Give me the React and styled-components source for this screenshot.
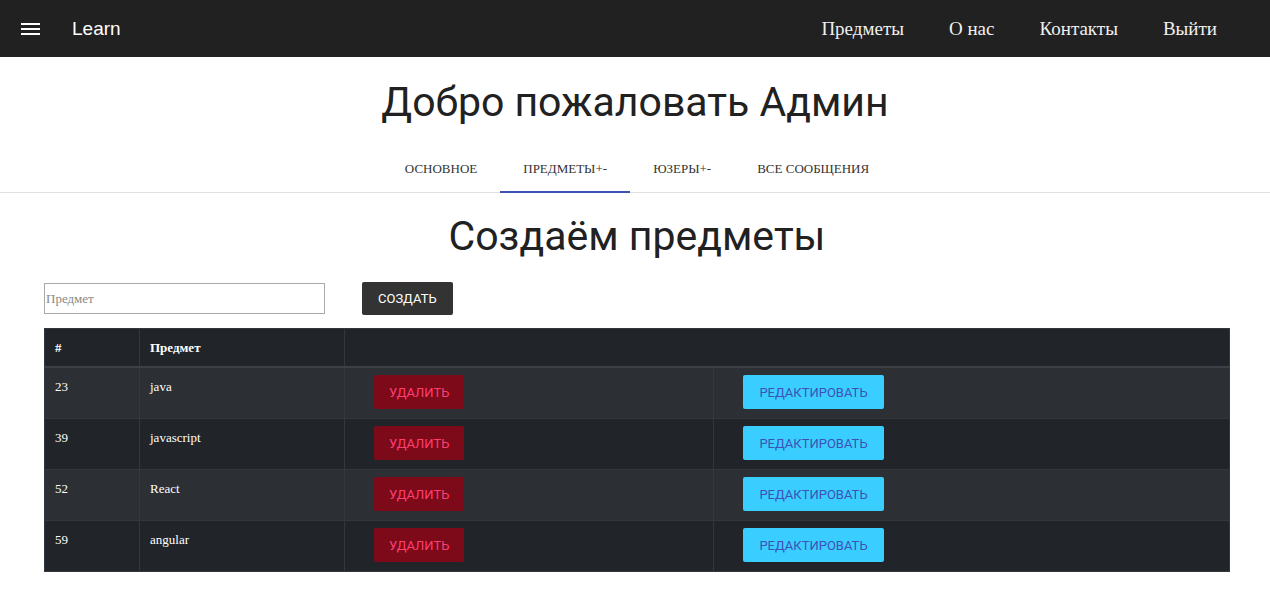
import React from 'react';
import styled, { createGlobalStyle } from 'styled-components';

const GlobalStyle = createGlobalStyle`
	body {
		margin: 0;
		background: #fff;
		font-family: 'Liberation Serif', serif;
	}
`;

const NavBar = styled.nav`
	display: flex;
	align-items: center;
	height: 57px;
	padding: 0 53px 0 21px;
	background: #212121;
	color: #fff;
`;

const Burger = styled.button`
	display: flex;
	flex-direction: column;
	justify-content: space-between;
	width: 19px;
	height: 12px;
	padding: 0;
	border: 0;
	background: none;
	margin-right: 32px;

	span {
		display: block;
		height: 2px;
		background: #fff;
	}
`;

const Brand = styled.a`
	font-family: 'Liberation Sans', Arial, sans-serif;
	font-size: 19px;
	font-weight: 400;
	color: #fff;
	margin-right: auto;
`;

const NavLinks = styled.div`
	display: flex;
	gap: 45px;
`;

const NavLink = styled.a`
	font-family: 'Liberation Serif', serif;
	font-size: 19px;
	color: #f0f0f0;
`;

const Title = styled.h1`
	margin: 0;
	padding-top: 21px;
	text-align: center;
	font-family: Roboto, 'Liberation Sans', sans-serif;
	font-size: 41px;
	font-weight: 400;
	line-height: 48px;
	color: #212121;
`;

const TabBar = styled.div`
	display: flex;
	justify-content: center;
	margin-top: 18px;
	padding-left: 4px;
	border-bottom: 1px solid #e0e0e0;
`;

const Tab = styled.div`
	height: 49px;
	padding: 3px 23px 0;
	display: flex;
	align-items: center;
	font-family: 'Liberation Serif', serif;
	font-size: 13px;
	text-transform: uppercase;
	color: #333;
	box-sizing: border-box;
	border-bottom: 2px solid ${(p) => (p.$active ? '#3f51b5' : 'transparent')};
	margin-bottom: -1px;
`;

const Section = styled.section`
	padding: 0 40px 0 44px;
`;

const SubTitle = styled.h2`
	margin: 19px 0 0;
	text-align: center;
	font-family: Roboto, 'Liberation Sans', sans-serif;
	font-size: 41px;
	font-weight: 400;
	line-height: 48px;
	color: #212121;
`;

const FormRow = styled.div`
	display: flex;
	align-items: center;
	gap: 37px;
	margin-top: 22px;
`;

const Input = styled.input`
	width: 281px;
	height: 31px;
	box-sizing: border-box;
	border: 1px solid #aaa;
	padding: 0 1px;
	font-family: 'Liberation Serif', serif;
	font-size: 13px;
	outline: none;

	&::placeholder {
		color: #888;
	}
`;

const DarkButton = styled.button`
	height: 33px;
	padding: 0 16px;
	border: 0;
	border-radius: 2px;
	background: #333;
	color: #fff;
	font-family: Roboto, 'Liberation Sans', sans-serif;
	font-size: 13px;
	text-transform: uppercase;
`;

const Table = styled.table`
	width: 100%;
	margin-top: 13px;
	border-collapse: collapse;
	color: #fff;
	font-family: 'Liberation Serif', serif;
	font-size: 13px;
	background: #212529;
`;

const Th = styled.th`
	text-align: left;
	vertical-align: top;
	padding: 11px 10px 10px;
	height: 16px;
	line-height: 16px;
	font-weight: bold;
	border: 1px solid #32383e;
	border-bottom: 2px solid #3a4046;
`;

const Row = styled.tr`
	background: ${(p) => (p.$odd ? '#2c3034' : '#212529')};
`;

const Td = styled.td`
	vertical-align: top;
	padding: 11px 10px 12px;
	line-height: 16px;
	border: 1px solid #32383e;
`;

const ActionTd = styled.td`
	vertical-align: top;
	padding: 7px 29px 9px;
	border: 1px solid #32383e;
`;

const ActionButton = styled.button`
	height: 34px;
	padding: 0 15px;
	border: 0;
	border-radius: 2px;
	font-family: Roboto, 'Liberation Sans', sans-serif;
	font-size: 13px;
	text-transform: uppercase;
	background: ${(p) => (p.$kind === 'danger' ? '#7d0a19' : '#39ceff')};
	color: ${(p) => (p.$kind === 'danger' ? '#ff3f74' : '#3f51b5')};
	min-width: ${(p) => (p.$kind === 'danger' ? 90 : 141)}px;
`;

const subjects = [
	{ id: 23, name: 'java' },
	{ id: 39, name: 'javascript' },
	{ id: 52, name: 'React' },
	{ id: 59, name: 'angular' },
];

export default function App() {
	return (
		<>
			<GlobalStyle />
			<NavBar>
				<Burger>
					<span />
					<span />
					<span />
				</Burger>
				<Brand>Learn</Brand>
				<NavLinks>
					<NavLink>Предметы</NavLink>
					<NavLink>О нас</NavLink>
					<NavLink>Контакты</NavLink>
					<NavLink>Выйти</NavLink>
				</NavLinks>
			</NavBar>

			<Title>Добро пожаловать Админ</Title>

			<TabBar>
				<Tab>Основное</Tab>
				<Tab $active>Предметы+-</Tab>
				<Tab>Юзеры+-</Tab>
				<Tab>Все сообщения</Tab>
			</TabBar>

			<Section>
				<SubTitle>Создаём предметы</SubTitle>
				<FormRow>
					<Input placeholder='Предмет' />
					<DarkButton>Создать</DarkButton>
				</FormRow>

				<Table>
					<colgroup>
						<col style={{ width: 95 }} />
						<col style={{ width: 205 }} />
						<col style={{ width: 369 }} />
						<col />
					</colgroup>
					<thead>
						<tr>
							<Th>#</Th>
							<Th>Предмет</Th>
							<Th colSpan={2}></Th>
						</tr>
					</thead>
					<tbody>
						{subjects.map((s, i) => (
							<Row key={s.id} $odd={i % 2 === 0}>
								<Td>{s.id}</Td>
								<Td>{s.name}</Td>
								<ActionTd>
									<ActionButton $kind='danger'>Удалить</ActionButton>
								</ActionTd>
								<ActionTd>
									<ActionButton>Редактировать</ActionButton>
								</ActionTd>
							</Row>
						))}
					</tbody>
				</Table>
			</Section>
		</>
	);
}
